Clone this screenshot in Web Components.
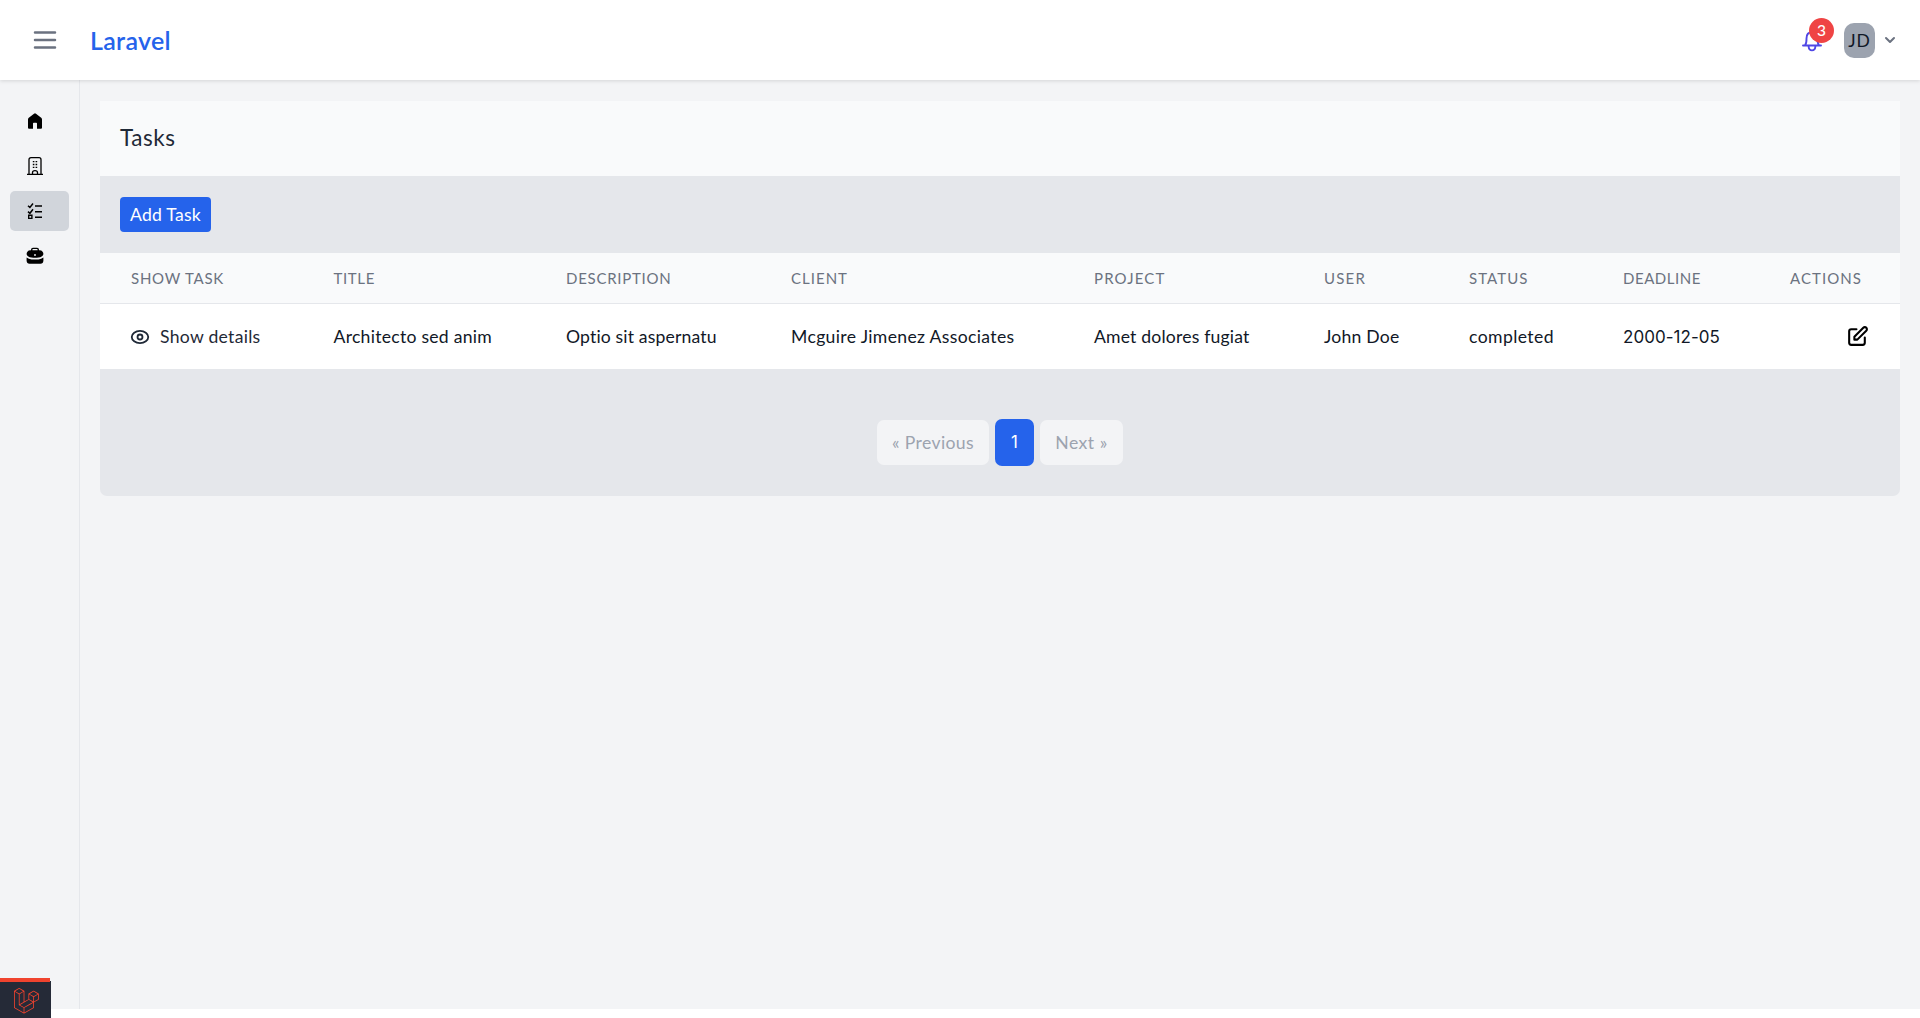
<!DOCTYPE html>
<html lang="en">
<head>
<meta charset="utf-8">
<title>Laravel</title>
<style>
html,body{margin:0;background:#fff}
body{font-family:Lato,"Open Sans","Liberation Sans",sans-serif;color:#111827}
</style>
</head>
<body>
<app-shell></app-shell>
<script>
const define = (name, html, extra) => {
  const t = document.createElement('template');
  t.innerHTML = html;
  customElements.define(name, class extends HTMLElement {
    constructor() {
      super();
      this.attachShadow({ mode: 'open' }).append(t.content.cloneNode(true));
    }
    connectedCallback() { if (extra) extra(this); }
  });
};

// A label whose tracking is adjusted so that it takes exactly w pixels.
define('fit-text', `<style>:host{display:inline-block;white-space:nowrap;text-align:left}span{display:inline-block}</style><span><slot></slot></span>`, el => {
  const w = parseFloat(el.getAttribute('w'));
  const s = el.shadowRoot.querySelector('span');
  el.style.width = w + 'px';
  const n = el.textContent.length;
  s.style.letterSpacing = '0px';
  s.style.letterSpacing = (w - s.getBoundingClientRect().width) / n + 'px';
});

const icons = {
  menu: ['0 0 24 24', '<path d="M4 6h16M4 12h16M4 18h16" fill="none" stroke="currentColor" stroke-width="2" stroke-linecap="round"/>'],
  bell: ['0 0 20 24', '<path d="M1 17.500h18M3.200 17C4.600 15.500 4.500 13.500 4.500 10.500C4.500 6.500 6.800 4.300 10 4.300S15.500 6.500 15.500 10.500C15.500 13.500 15.400 15.500 16.800 17M6.600 18.500C7 23.600 13 23.600 13.400 18.500M10 4.300V2.500" fill="none" stroke="currentColor" stroke-width="1.900" stroke-linecap="round" stroke-linejoin="round"/>'],
  chevron: ['0 0 20 20', '<path fill="currentColor" fill-rule="evenodd" d="M5.293 7.293a1 1 0 011.414 0L10 10.586l3.293-3.293a1 1 0 111.414 1.414l-4 4a1 1 0 01-1.414 0l-4-4a1 1 0 010-1.414z"/>'],
  home: ['0 0 18 18', '<path fill="currentColor" d="M9 1.300Q9.500 1.300 10 1.700L15.200 5.800Q16 6.500 16 7.500V15.700Q16 16.700 15 16.700H11V11.500Q11 10.700 10.200 10.700H7.800Q7 10.700 7 11.500V16.700H3Q2 16.700 2 15.700V7.500Q2 6.500 2.800 5.800L8 1.700Q8.500 1.300 9 1.300Z"/>'],
  building: ['0 0 18 18', '<g fill="none" stroke="currentColor" stroke-width="1.300"><path d="M1 17.300h16M3 17.300V2.700Q3 .700 5 .700H13Q15 .700 15 2.700V17.300"/><path d="M6.500 17V15.500Q6.500 13.600 9 13.600T11.500 15.500V17"/><path d="M6.800 4.600h1.600M9.600 4.600h1.600M6.800 7.500h1.600M9.600 7.500h1.600M6.800 10.400h1.600M9.600 10.400h1.600" stroke-width="1.400"/></g>'],
  tasks: ['0 0 18 18', '<path d="M2 3.800l1.900 1.700L7 1.500M2 9.600l1.900 1.700L7 7.300M9 4h7M9 9.700h7M9 15.300h7" fill="none" stroke="currentColor" stroke-width="1.500"/><path d="M2.700 13.200h3.200v3.200H2.700z" fill="none" stroke="currentColor" stroke-width="1.400"/>'],
  briefcase: ['0 0 18 18', '<path d="M5.700 4.200V2.700Q5.700 1.400 7 1.400h4Q12.300 1.400 12.300 2.700V4.200" fill="none" stroke="currentColor" stroke-width="1.400"/><path fill="currentColor" fill-rule="evenodd" d="M4.500 3.300h9Q15.500 3.300 16.600 4.700Q17.700 6.300 17.200 7.700Q16.400 9.900 12.500 10.500Q9 11 5.500 10.500Q1.600 9.900.800 7.700Q.300 6.300 1.400 4.700Q2.500 3.300 4.500 3.300ZM9 7.100a.9.900 0 1 0 0 1.800a.9.900 0 1 0 0-1.800Z"/><path fill="currentColor" d="M.600 10.400Q2.700 12.100 5.500 12.400Q9 12.800 12.500 12.400Q15.300 12.100 17.400 10.400V13.700Q17.200 16.700 14.500 16.700H3.500Q.800 16.700 .600 13.700Z"/>'],
  eye: ['0 0 24 24', '<g fill="none" stroke="currentColor" stroke-width="2"><ellipse cx="12" cy="12" rx="9" ry="6.600"/><circle cx="12" cy="12" r="2.700"/></g>'],
  edit: ['0 0 24 24', '<path fill="none" stroke="currentColor" stroke-width="2" stroke-linecap="round" stroke-linejoin="round" d="M11 5H6a2 2 0 00-2 2v11a2 2 0 002 2h11a2 2 0 002-2v-5m-1.414-9.414a2 2 0 112.828 2.828L11.828 15H9v-2.828l8.586-8.586z"/>'],
  laravel: ['0 0 50 52', '<path fill="currentColor" fill-rule="evenodd" d="M49.626 11.564a.809.809 0 0 1 .028.209v10.972a.8.8 0 0 1-.402.694l-9.209 5.302V39.25c0 .286-.152.55-.4.694L20.42 51.01c-.044.025-.092.041-.14.058-.018.006-.035.017-.054.022a.805.805 0 0 1-.41 0c-.022-.006-.042-.018-.063-.026-.044-.016-.09-.03-.132-.054L.402 39.944A.801.801 0 0 1 0 39.25V6.334c0-.072.01-.142.028-.21.006-.023.02-.044.028-.067.015-.042.029-.085.051-.124.015-.026.037-.047.055-.071.023-.032.044-.065.071-.093.023-.023.053-.04.079-.06.029-.024.055-.05.088-.069h.001l9.61-5.533a.802.802 0 0 1 .8 0l9.61 5.533h.002c.032.02.059.045.088.068.026.02.055.038.078.06.028.029.048.062.072.094.017.024.04.045.054.071.023.04.036.082.052.124.008.023.022.044.028.068a.809.809 0 0 1 .028.209v20.559l8.008-4.611v-10.51c0-.07.01-.141.028-.208.007-.024.02-.045.028-.068.016-.042.03-.085.052-.124.015-.026.037-.047.054-.071.024-.032.044-.065.072-.093.023-.023.052-.04.078-.06.03-.024.056-.05.088-.069h.001l9.611-5.533a.801.801 0 0 1 .8 0l9.61 5.533c.034.02.06.045.09.068.025.02.054.038.077.06.028.029.048.062.072.094.018.024.04.045.054.071.023.039.036.082.052.124.009.023.022.044.028.068zm-1.574 10.718v-9.124l-3.363 1.936-4.646 2.675v9.124l8.01-4.611zm-9.61 16.505v-9.13l-4.57 2.61-13.05 7.448v9.216l17.62-10.144zM1.602 7.719v31.068L19.22 48.93v-9.214l-9.204-5.209-.003-.002-.004-.002c-.031-.018-.057-.044-.086-.066-.025-.02-.054-.036-.076-.058l-.002-.003c-.026-.025-.044-.056-.066-.084-.02-.027-.044-.05-.06-.078l-.001-.003c-.018-.03-.029-.066-.042-.1-.013-.03-.03-.058-.038-.09v-.001c-.01-.038-.012-.078-.016-.117-.004-.03-.012-.06-.012-.09v-.002-21.481L4.965 9.654 1.602 7.72zm8.81-5.994L2.405 6.334l8.005 4.609 8.006-4.61-8.006-4.608zm4.164 28.764l4.645-2.674V7.719l-3.363 1.936-4.646 2.675v20.096l3.364-1.937zM39.243 7.164l-8.006 4.609 8.006 4.609 8.005-4.61-8.005-4.608zm-.801 10.605l-4.646-2.675-3.363-1.936v9.124l4.645 2.674 3.364 1.937v-9.124zM20.02 38.33l11.743-6.704 5.87-3.35-8-4.606-9.211 5.303-8.395 4.833 7.993 4.524z"/>']
};
define('app-icon', `<style>:host{display:block;flex:none}svg{display:block;width:100%;height:100%}</style>`, el => {
  const [box, body] = icons[el.getAttribute('name')];
  el.shadowRoot.innerHTML += `<svg viewBox="${box}" aria-hidden="true">${body}</svg>`;
});

define('nav-bar', `<style>
:host{display:flex;align-items:center;height:80px;box-sizing:border-box;padding:0 20px 0 30px;background:#fff;box-shadow:0 1px 4px rgba(0,0,0,.13);position:relative;z-index:2}
.menu{width:30px;height:30px;color:#6b7280}
.brand{margin-left:30px;font-size:25px;line-height:30px;font-weight:600;color:#2563eb}
.right{margin-left:auto;display:flex;align-items:center}
.bell{position:relative;width:20px;height:24px;color:#4f46e5;margin-right:22px}
.bell app-icon{width:20px;height:24px}
.badge{position:absolute;left:7px;top:-10px;width:25px;height:25px;border-radius:50%;background:#ef4444;color:#fff;font:500 15.500px/24px Lato,sans-serif;text-align:center}
.avatar{width:31px;height:35px;border-radius:10px;background:#9ca3af;font-size:17.500px;line-height:36px;text-align:center;font-weight:400;margin-top:1px}
.chev{width:20px;height:20px;color:#6b7280;margin-left:5px}
</style>
<app-icon class="menu" name="menu"></app-icon>
<fit-text class="brand" w="81">Laravel</fit-text>
<div class="right">
<div class="bell"><app-icon name="bell"></app-icon><div class="badge">3</div></div>
<div class="avatar"><fit-text w="22.500">JD</fit-text></div>
<app-icon class="chev" name="chevron"></app-icon>
</div>`);

define('side-item', `<style>
:host{display:flex;align-items:center;height:40px;padding-left:16px;border-radius:5px;color:#000}
:host([active]){background:#d1d5db}
::slotted(app-icon){width:18px;height:18px}
</style><slot></slot>`);
define('side-bar', `<style>
:host{display:flex;flex-direction:column;gap:5px;width:80px;box-sizing:border-box;padding:21px 10px;border-right:1px solid #e5e7eb;background:#f3f4f6;flex:none}
</style>
<side-item><app-icon name="home"></app-icon></side-item>
<side-item><app-icon name="building"></app-icon></side-item>
<side-item active><app-icon name="tasks"></app-icon></side-item>
<side-item><app-icon name="briefcase"></app-icon></side-item>`);

define('task-table', `<style>
:host{display:block}
table{width:1800px;border-collapse:separate;border-spacing:0;table-layout:fixed}
th,td{padding:0 29px 0 31px;text-align:left;box-sizing:border-box}
th{height:51px;background:#f9fafb;color:#6b7280;font-size:15px;font-weight:400;line-height:20px;border-bottom:1px solid #e5e7eb}
td{height:65px;background:#fff;font-size:17.600px;line-height:25px;color:#111827}
th:last-child{text-align:right;padding-right:38px}
td:last-child{padding-right:30px}
.show{display:flex;align-items:center;gap:9px;color:#1f2937;margin-left:-2px}
.show app-icon{width:22px;height:22px}
.num{font-family:Inter,sans-serif;font-size:17px}
.edit{width:25px;height:25px;margin-left:auto;color:#000}
</style>
<table><colgroup><col style="width:202.500px"><col style="width:232.500px"><col style="width:225px"><col style="width:303px"><col style="width:230px"><col style="width:145px"><col style="width:154px"><col style="width:154px"><col></colgroup>
<thead><tr>
<th><fit-text w="93">SHOW TASK</fit-text></th><th><fit-text w="41.500">TITLE</fit-text></th><th><fit-text w="105.500">DESCRIPTION</fit-text></th><th><fit-text w="57">CLIENT</fit-text></th><th><fit-text w="71.500">PROJECT</fit-text></th><th><fit-text w="42">USER</fit-text></th><th><fit-text w="59.500">STATUS</fit-text></th><th><fit-text w="78">DEADLINE</fit-text></th><th><fit-text w="72">ACTIONS</fit-text></th>
</tr></thead>
<tbody><tr>
<td><div class="show"><app-icon name="eye"></app-icon><fit-text w="100.500">Show details</fit-text></div></td>
<td><fit-text w="158.500">Architecto sed anim</fit-text></td><td><fit-text w="151">Optio sit aspernatu</fit-text></td><td><fit-text w="223.500">Mcguire Jimenez Associates</fit-text></td><td><fit-text w="155.500">Amet dolores fugiat</fit-text></td><td><fit-text w="75.500">John Doe</fit-text></td><td><fit-text w="85">completed</fit-text></td><td><fit-text class="num" w="97">2000-12-05</fit-text></td>
<td><app-icon class="edit" name="edit"></app-icon></td>
</tr></tbody></table>`);

define('page-links', `<style>
:host{display:flex;justify-content:center;align-items:center;gap:6px;height:127px;box-sizing:border-box;padding-top:20px}
div{height:45px;line-height:45px;border-radius:7px;background:#f3f4f6;color:#9ca3af;font-size:17.600px;text-align:center;font-weight:400}
.on{height:47px;line-height:47px;width:39px;background:#2563eb;color:#fff;font-family:Inter,sans-serif;font-size:16.800px}
</style>
<div style="width:112px"><fit-text w="82">« Previous</fit-text></div><div class="on">1</div><div style="width:83px"><fit-text w="52.500">Next »</fit-text></div>`);

define('task-panel', `<style>
:host{display:block;width:1800px;background:#e5e7eb;border-radius:0 0 7px 7px;overflow:hidden}
h1{margin:0;height:75px;box-sizing:border-box;padding-left:20px;background:#f9fafb;font-size:22.500px;line-height:73px;font-weight:400;color:#1f2937}
.bar{height:77px;display:flex;align-items:center;padding-left:20px}
button{all:unset;width:91px;height:35px;border-radius:4px;background:#2563eb;color:#fff;font-size:17.600px;line-height:35px;text-align:center;font-weight:400}
</style>
<h1><fit-text w="55.500">Tasks</fit-text></h1>
<div class="bar"><button><fit-text w="71">Add Task</fit-text></button></div>
<task-table></task-table><page-links></page-links>`);

define('debug-badge', `<style>
:host{position:fixed;left:0;bottom:0;width:51px;height:37px;background:#252a37;z-index:5;color:#f4432e;display:flex;align-items:center;justify-content:center}
:host::before{content:"";position:absolute;left:0;top:-3px;width:50px;height:4px;background:#f0432e}
app-icon{width:25px;height:26px;margin:2px 0 0 2px}
</style><app-icon name="laravel"></app-icon>`);

define('app-shell', `<style>
:host{display:block;height:1018px;overflow:hidden;background:#fff}
.body{display:flex;height:929px;background:#f3f4f6}
main{padding:21px 20px 0;flex:1}
</style><nav-bar></nav-bar><div class="body"><side-bar></side-bar><main><task-panel></task-panel></main></div><debug-badge></debug-badge>`);
</script>
</body>
</html>
